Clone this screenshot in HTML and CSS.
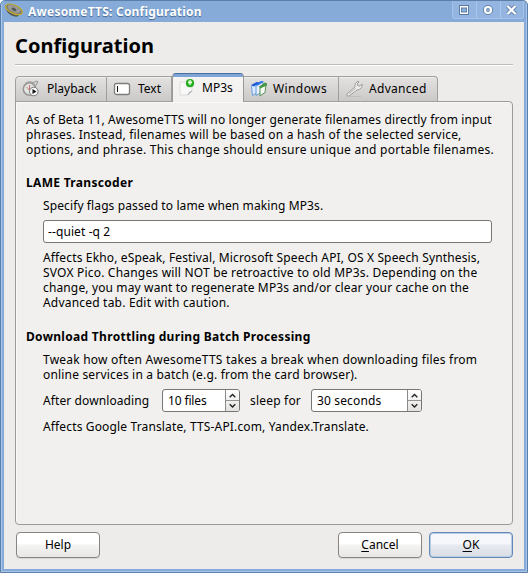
FILE: index.html
```html
<!DOCTYPE html>
<html lang="en">
<head>
<meta charset="utf-8">
<title>AwesomeTTS: Configuration</title>
<link rel="stylesheet" href="styles.css">
</head>
<body>
<div class="window">
  <header class="titlebar">
    <svg class="app-icon" width="20" height="18" viewBox="0 0 20 18"><path d="M2 4C1 8 5 13 9 14c3 1 5 1 6-1z" fill="#555b5d"/><ellipse cx="10" cy="7.3" rx="9" ry="4.2" transform="rotate(24 10 7.3)" fill="#777b7b" stroke="#c9ad22" stroke-width="1.2"/><ellipse cx="10" cy="7" rx="7" ry="3" transform="rotate(24 10 7)" fill="#9b9c99"/><ellipse cx="10" cy="7.4" rx="2.6" ry="1.5" transform="rotate(24 10 7.4)" fill="#555957"/></svg>
    <span class="caption">AwesomeTTS: Configuration</span>
    <div class="controls">
      <span class="control"><svg width="23" height="17" viewBox="0 0 23 17"><path d="M6 4h10v10h-10z" fill="#5b7ca5"/><path d="M7 5h8v8h-8z" fill="#fff"/><path d="M8 6.500h6v5h-6z" fill="#5b7ca5"/><path d="M9 7.500h4v3h-4z" fill="#91b1dc"/></svg></span>
      <span class="control"><svg width="23" height="17" viewBox="0 0 23 17"><circle cx="11" cy="9" r="3.1" fill="none" stroke="#6485ad" stroke-width="4"/><circle cx="11" cy="9" r="3" fill="none" stroke="#fff" stroke-width="2.2"/></svg></span>
      <span class="control"><svg width="22" height="17" viewBox="0 0 22 17"><path d="M6.500 5l8 8m0-8l-8 8" stroke="#6485ad" stroke-width="4"/><path d="M6.500 5l8 8m0-8l-8 8" stroke="#fff" stroke-width="2.2"/></svg></span>
    </div>
  </header>
  <main class="client">
    <h1>Configuration</h1>
    <nav class="tabs">
      <div class="tab playback"><svg width="18" height="18" viewBox="0 0 18 18"><path d="M10 3l5-2 1 1-3 5z" fill="#d2d2d0" stroke="#969694"/><circle cx="7.5" cy="9" r="6.2" fill="#e2e2e1" stroke="#959593" stroke-width="1.5"/><path d="M7.5 5v5m-3-3l3 3" fill="none" stroke="#c87770"/><path d="M3 3.5Q7 0 12 3" fill="none" stroke="#a4a4a1"/><circle cx="11.8" cy="11.5" r="4.3" fill="#f7f7f7" stroke="#777"/><path d="M10.5 9l4 2.5-4 2.5z" fill="#151515"/></svg><span>Playback</span></div>
      <div class="tab text"><svg width="18" height="18" viewBox="0 0 18 18"><rect x="1.5" y="3.5" width="15" height="11" rx="2" fill="#fff" stroke="#7e7e7c" stroke-width="1.3"/><path d="M4.5 6v6" stroke="#111"/></svg><span>Text</span></div>
      <div class="tab active"><svg width="18" height="18" viewBox="0 0 18 18"><path d="M1 3h12v9l-4 4H1z" fill="#f8f8f8" stroke="#dcdcdb"/><path d="M9 16q1-4 4-4z" fill="#cacac9" stroke="#aaa" stroke-width=".6"/><circle cx="11" cy="4.2" r="4.1" fill="#26ab20"/><circle cx="11" cy="3.4" r="2.3" fill="#71d467"/><path d="M11 1.2v4.5m-2-2.3h4" stroke="#e9ffe5" stroke-width="1.2"/></svg><span>MP3s</span></div>
      <div class="tab windows"><svg width="18" height="18" viewBox="0 0 18 18"><path d="M1.5 6l5-3.500 2 .5-2 10-4 2.500z" fill="#dbeaff" stroke="#6b9bdc"/><path d="M1 5l6-3 3 .5-6 4z" fill="#1c59d8"/><path d="M6 6l5-4 2 .5-2 10-5 3z" fill="#e5f1ff" stroke="#6599cf"/><path d="M5 5l6-4 3 .5-6 4z" fill="#2f71e4"/><path d="M10 7.500l6-3-1 8-5 3.500z" fill="#f5faf4" stroke="#539050"/><path d="M9 6.500l6-4 2 1v2l-7 3z" fill="#489846"/></svg><span>Windows</span></div>
      <div class="tab advanced"><svg width="18" height="18" viewBox="0 0 18 18"><path d="M3 16.500h13" stroke="#c0c0be"/><path d="M2 14L10 7Q9 3 13 1l1 1-2 2 1 2 2 0 2-2q1 5-5 6L4 16q-3 1-2-2z" fill="#eeeeed" stroke="#9d9d9b"/><path d="M4 14l7-6" stroke="#bbb"/></svg><span>Advanced</span></div>
    </nav>
    <section class="panel">
      <p class="intro"><span class="a1">As of Beta 11, AwesomeTTS will no longer generate filenames directly from input</span><span class="a2">phrases. Instead, filenames will be based on a hash of the selected service,</span><span class="a3">options, and phrase. This change should ensure unique and portable filenames.</span></p>
      <h2 class="lame">LAME Transcoder</h2>
      <div class="group">
        <p class="specify"><span class="b1">Specify flags passed to lame when making MP3s.</span></p>
        <div class="input"><span>--quiet -q 2</span></div>
        <p class="note"><span class="c1">Affects Ekho, eSpeak, Festival, Microsoft Speech API, OS X Speech Synthesis,</span><span class="c2">SVOX Pico. Changes will NOT be retroactive to old MP3s. Depending on the</span><span class="c3">change, you may want to regenerate MP3s and/or clear your cache on the</span><span class="c4">Advanced tab. Edit with caution.</span></p>
      </div>
      <h2 class="throttle">Download Throttling during Batch Processing</h2>
      <div class="group">
        <p class="tweak"><span class="d1">Tweak how often AwesomeTTS takes a break when downloading files from</span><span class="d2">online services in a batch (e.g. from the card browser).</span></p>
        <div class="limits">
          <span class="after">After downloading</span>
          <div class="spin files"><span class="value">10 files</span><svg width="14" height="21" viewBox="0 0 14 21"><path d="M0 10.5h14" stroke="#8b8b89"/><path d="M4 7l3-3 3 3M4 14.500l3 3 3-3" fill="none" stroke="#222" stroke-width="1.5"/></svg></div>
          <span class="sleep">sleep for</span>
          <div class="spin seconds"><span class="value">30 seconds</span><svg width="14" height="21" viewBox="0 0 14 21"><path d="M0 10.5h14" stroke="#8b8b89"/><path d="M4 7l3-3 3 3M4 14.500l3 3 3-3" fill="none" stroke="#222" stroke-width="1.5"/></svg></div>
        </div>
        <p class="services"><span class="e1">Affects Google Translate, TTS-API.com, Yandex.Translate.</span></p>
      </div>
    </section>
    <footer class="buttons">
      <div class="button help">Help</div>
      <div class="button"><u>C</u>ancel</div>
      <div class="button ok"><u>O</u>K</div>
    </footer>
  </main>
</div>
</body>
</html>
```

FILE: styles.css
```css
* { box-sizing: border-box; }
body { margin: 0; background: #fff; color: #000; font: 12px/15px "Noto Sans", "Open Sans", sans-serif; }
h1, h2, p { margin: 0; }
p, span { white-space: nowrap; }
p span { display: block; height: 15px; }
svg { display: block; flex: none; }
.window { width: 528px; height: 573px; padding: 0 3px 3px 2px; border: 1px solid #5c7fa9; border-radius: 5px 5px 0 0; background: #86abd9; box-shadow: inset 1px 0 #a8c6ec, inset -1px -1px #a8c6ec; }
.titlebar { display: flex; height: 21px; padding-left: 1px; color: #fff; }
.app-icon { margin-top: 1px; }
.caption { margin: 3px 0 0 4px; font-weight: bold; text-shadow: 0 1px 1px #42648f; letter-spacing: .22px; }
.controls { display: flex; height: 18px; margin: 0 0 0 auto; border: 1px solid #a5c3eb; border-top: 0; border-radius: 0 0 3px 3px; background: #94b5e0; }
.control + .control { border-left: 1px solid #a9c6ec; }
.client { height: 547px; margin-left: 1px; padding: 13px 11px 0; background: #edecea; }
h1 { height: 31px; margin-bottom: 8px; border-bottom: 1px solid #fff; box-shadow: inset 0 -1px #bdbcba; font-size: 20px; line-height: 22px; letter-spacing: .05px; }
.tabs { display: flex; align-items: flex-end; height: 28px; margin-bottom: -1px; position: relative; }
.tab { display: flex; gap: 7px; height: 26px; padding: 3px 0 0 6px; border: 1px solid #a09f9d; border-left-width: 0; background: linear-gradient(#e3e2e0, #cbc9c8); line-height: 18px; box-shadow: inset 0 1px #efefed; }
.playback { width: 92px; border-left-width: 1px; border-radius: 4px 0 0; }
.text { width: 65px; }
.active { gap: 5px; width: 72px; height: 29px; padding: 5px 0 0 6px; border: 1px solid #999; border-top: 1px solid #4a6f9f; border-bottom: 0; border-radius: 4px 4px 0 0; background: linear-gradient(#7fa5d6 0 3px, #f5f4f3 3px, #f1f0ee); box-shadow: none; }
.windows { gap: 5px; width: 95px; letter-spacing: .4px; }
.advanced { gap: 6px; width: 99px; border-radius: 0 4px 0 0; letter-spacing: .3px; }
.panel { height: 424px; padding: 10px 10px 0; border: 1px solid #9b9a98; border-radius: 0 4px 4px 4px; background: #f1f0ee; box-shadow: inset 1px 1px #faf9f8; }
h2 { font-size: 12px; line-height: 15px; letter-spacing: .31px; }
.a1, .c1, .e1 { letter-spacing: .145px; }
.a2, .c2, .c4 { letter-spacing: .2px; }
.a3 { letter-spacing: .245px; }
.b1 { letter-spacing: .11px; }
.c3 { letter-spacing: .135px; }
.d1 { letter-spacing: .22px; }
.d2 { letter-spacing: .18px; }
.lame { margin-top: 18px; }
.group { margin-left: 17px; }
.specify { margin-top: 8px; }
.input { display: flex; align-items: center; width: 449px; height: 23px; margin-top: 7px; padding-left: 4px; border: 1px solid #777674; border-radius: 3px; background: #fff; letter-spacing: .1px; }
.note { margin-top: 7px; }
.throttle { margin-top: 19px; }
.tweak { margin-top: 8px; }
.limits { display: flex; align-items: center; height: 23px; margin-top: 7px; }
.after { width: 119px; letter-spacing: .1px; }
.sleep { width: 61px; margin-left: 10px; letter-spacing: .2px; }
.spin { display: flex; width: 78px; height: 23px; border: 1px solid #777674; border-radius: 3px; overflow: hidden; background: #fff; }
.value { flex: 1; padding: 3px 0 0 5px; line-height: 15px; }
.spin svg { background: linear-gradient(#fff, #e3e2e0); border-left: 1px solid #8b8b89; }
.files { letter-spacing: -.15px; }
.seconds { width: 111px; letter-spacing: .15px; }
.services { margin-top: 7px; }
.buttons { display: flex; gap: 7px; height: 26px; margin: 7px 0 0 1px; }
.button { width: 84px; height: 26px; border: 1px solid #878481; border-radius: 4px; background: linear-gradient(#fff 0 45%, #f4f4f3 50%, #e8e7e5); text-align: center; line-height: 24px; box-shadow: 0 1px #d7d6d4; }
.help { margin-right: auto; }
.ok { border-color: #6389b8; background: linear-gradient(#f5f7fa 0 45%, #e7eaf0 50%, #d9dde4); box-shadow: inset 0 0 0 1px #b9cce3; }
u { text-underline-offset: 2px; }
```
